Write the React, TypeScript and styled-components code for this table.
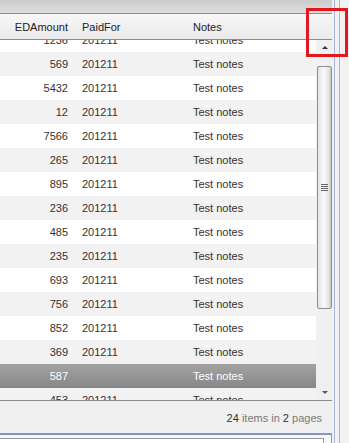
import React from "react";
import styled, { createGlobalStyle } from "styled-components";

const GlobalStyle = createGlobalStyle`
  html, body {
    margin: 0;
    padding: 0;
    background: #f2f2f2;
    font-family: "Liberation Sans", Arial, sans-serif;
  }
`;

const Page = styled.div`
  position: relative;
  display: flex;
  width: 349px;
  height: 443px;
  overflow: hidden;
`;

const Main = styled.div`
  width: 332px;
  display: flex;
  flex-direction: column;
  background: #ffffff;
  & > * {
    flex-shrink: 0;
  }
`;

const TopBand = styled.div`
  height: 13px;
  background: linear-gradient(to bottom, #cbcbcb, #dedede);
  border-bottom: 1px solid #8c8c8c;
`;

const Columns = styled.div<{ $head?: boolean }>`
  display: grid;
  grid-template-columns: 74px 113px 1fr;
  align-items: center;
  font-size: 11px;
  color: ${(p) => (p.$head ? "#222" : "#333")};
`;

const Header = styled(Columns)`
  height: 25px;
  background: linear-gradient(to bottom, #f7f7f7, #eaeaea);
  border-bottom: 1px solid #8c8c8c;
`;

const Cell = styled.div<{ $right?: boolean; $pad?: number }>`
  text-align: ${(p) => (p.$right ? "right" : "left")};
  padding: ${(p) => (p.$right ? "0 6px 0 0" : `0 0 0 ${p.$pad ?? 6}px`)};
  white-space: nowrap;
  overflow: hidden;
`;

const Body = styled.div`
  display: flex;
  height: 360px;
  border-bottom: 1px solid #8c8c8c;
`;

const Viewport = styled.div`
  flex: 1;
  overflow: hidden;
`;

const Rows = styled.div`
  margin-top: -12px;
`;

const Row = styled(Columns)<{ $alt?: boolean; $selected?: boolean }>`
  height: 24px;
  background: ${(p) =>
    p.$selected
      ? "linear-gradient(to bottom, #a3a3a3, #878787)"
      : p.$alt
      ? "#f2f2f2"
      : "#ffffff"};
  color: ${(p) => (p.$selected ? "#ffffff" : "#333")};
`;

const Scrollbar = styled.div`
  width: 16px;
  display: flex;
  flex-direction: column;
  background: #f0f0f0;
`;

const ArrowBox = styled.div`
  height: 15px;
  display: flex;
  align-items: center;
  justify-content: center;
  padding-left: 1px;
`;

const Arrow = styled.div<{ $down?: boolean }>`
  width: 0;
  height: 0;
  border-left: 3px solid transparent;
  border-right: 3px solid transparent;
  ${(p) =>
    p.$down
      ? "border-top: 3px solid #555;"
      : "border-bottom: 3px solid #333;"}
`;

const Track = styled.div`
  flex: 1;
  padding-top: 11px;
`;

const Thumb = styled.div`
  margin-left: 1px;
  width: 13px;
  height: 241px;
  border: 1px solid #8f8f8f;
  border-radius: 2px;
  background: linear-gradient(to right, #e2e2e2, #fafafa 45%, #e6e6e6 80%, #c8c8c8);
  display: flex;
  align-items: center;
  justify-content: center;
`;

const Grip = styled.div`
  width: 7px;
  height: 8px;
  background: repeating-linear-gradient(
    to bottom,
    #666 0px,
    #666 1px,
    transparent 1px,
    transparent 2px
  );
`;

const Footer = styled.div`
  height: 32px;
  background: #f0f0f0;
  display: flex;
  align-items: center;
  justify-content: flex-end;
  padding-right: 10px;
  padding-top: 2px;
  box-sizing: border-box;
  font-size: 11px;
  color: #7a7a7a;
`;

const Strong = styled.span`
  color: #333;
`;

const BottomPanel = styled.div`
  flex: 1 1 0;
  min-height: 0;
  overflow: hidden;
  border-top: 2px solid #8595c8;
  border-right: 1px solid #8595c8;
  background: #f7f7f7;
  padding: 3px 7px 0 0;
`;

const InnerBox = styled.div`
  height: 20px;
  border-top: 1px solid #9a9a9a;
  border-right: 1px solid #9a9a9a;
  background: #ffffff;
`;

const Side = styled.div`
  flex: 1;
  display: flex;
  background: #f2f2f2;
`;

const Rail = styled.div`
  margin-left: 2px;
  width: 4px;
  border-left: 1px solid #a9b3dc;
  border-right: 1px solid #a9b3dc;
  background: #f0f2f8;
`;

const Marker = styled.div`
  position: absolute;
  left: 306px;
  top: 8px;
  width: 42px;
  height: 49px;
  box-sizing: border-box;
  border: 3px solid #e0191e;
`;

const rows: { amount: string; paid: string }[] = [
  { amount: "1236", paid: "201211" },
  { amount: "569", paid: "201211" },
  { amount: "5432", paid: "201211" },
  { amount: "12", paid: "201211" },
  { amount: "7566", paid: "201211" },
  { amount: "265", paid: "201211" },
  { amount: "895", paid: "201211" },
  { amount: "236", paid: "201211" },
  { amount: "485", paid: "201211" },
  { amount: "235", paid: "201211" },
  { amount: "693", paid: "201211" },
  { amount: "756", paid: "201211" },
  { amount: "852", paid: "201211" },
  { amount: "369", paid: "201211" },
  { amount: "587", paid: "" },
  { amount: "453", paid: "201211" },
];

const SELECTED = 14;

export default function App() {
  return (
    <>
      <GlobalStyle />
      <Page>
        <Main>
          <TopBand />
          <Header $head>
            <Cell $right>EDAmount</Cell>
            <Cell $pad={8}>PaidFor</Cell>
            <Cell>Notes</Cell>
          </Header>
          <Body>
            <Viewport>
              <Rows>
                {rows.map((r, i) => (
                  <Row key={i} $alt={i % 2 === 1} $selected={i === SELECTED}>
                    <Cell $right>{r.amount}</Cell>
                    <Cell $pad={8}>{r.paid}</Cell>
                    <Cell>Test notes</Cell>
                  </Row>
                ))}
              </Rows>
            </Viewport>
            <Scrollbar>
              <ArrowBox>
                <Arrow />
              </ArrowBox>
              <Track>
                <Thumb>
                  <Grip />
                </Thumb>
              </Track>
              <ArrowBox>
                <Arrow $down />
              </ArrowBox>
            </Scrollbar>
          </Body>
          <Footer>
            <Strong>24</Strong>&nbsp;items in&nbsp;<Strong>2</Strong>&nbsp;pages
          </Footer>
          <BottomPanel>
            <InnerBox />
          </BottomPanel>
        </Main>
        <Side>
          <Rail />
        </Side>
        <Marker />
      </Page>
    </>
  );
}
